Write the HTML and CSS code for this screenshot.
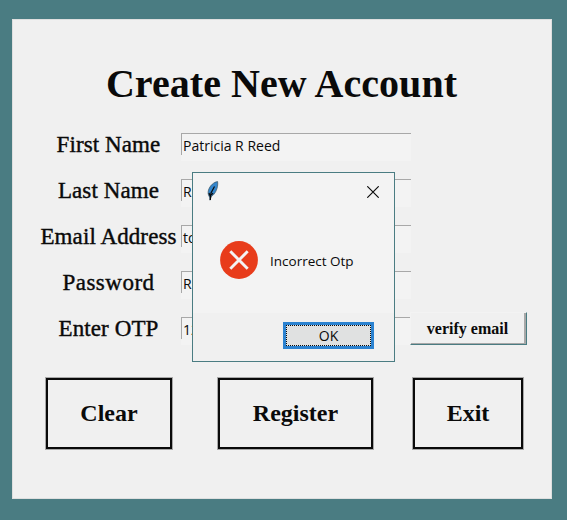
FILE: index.html
```html
<!DOCTYPE html>
<html lang="en">
<head>
<meta charset="utf-8">
<title>Create New Account</title>
<link rel="stylesheet" href="styles.css">
</head>
<body>
<main class="panel">
  <h1 class="title">Create New Account</h1>
  <form class="fields">
    <div class="row"><label class="label">First Name</label><div class="entry">Patricia R Reed</div></div>
    <div class="row"><label class="label">Last Name</label><div class="entry">R</div></div>
    <div class="row"><label class="label">Email Address</label><div class="entry">to</div></div>
    <div class="row"><label class="label spaced">Password</label><div class="entry">R</div></div>
    <div class="row"><label class="label">Enter OTP</label><div class="entry">12</div><button type="button" class="verify">verify email</button></div>
  </form>
  <div class="actions">
    <button type="button" class="action clear">Clear</button>
    <button type="button" class="action register">Register</button>
    <button type="button" class="action exit">Exit</button>
  </div>
</main>
<section class="dialog" role="alertdialog">
  <header class="dialog-bar">
    <svg class="feather" width="12" height="20" viewBox="0 0 12 20">
      <path d="M10.600.6C7 1 3 4.500 1.500 9C.8 11.500 1 14 2.500 16L3 19.200L4.200 15.500C8 13.500 11.500 7 10.600.6Z" fill="#3486cc" stroke="#3c5560" stroke-width=".7"/>
      <path d="M7.500 5.500L4 12L3.300 19M2 12L3.500 16M4.500 14L6 12" fill="none" stroke="#0a0a0a" stroke-width="1.200"/>
    </svg>
    <svg class="close" width="12" height="12" viewBox="0 0 12 12"><path d="M.3.3L11.700 11.700M11.700.3L.3 11.700" stroke="#0a0a0a" stroke-width="1.150"/></svg>
  </header>
  <div class="message">
    <svg width="38" height="38" viewBox="0 0 38 38"><circle cx="19" cy="19" r="18.900" fill="#e83c1b"/><path d="M10.300 10.300L27.700 27.700M27.700 10.300L10.300 27.700" stroke="#f3f3f3" stroke-width="2.900"/></svg>
    <span class="message-text">Incorrect Otp</span>
  </div>
  <footer class="dialog-foot"><button type="button" class="ok"><span>OK</span></button></footer>
</section>
</body>
</html>
```
FILE: styles.css
```css
* { box-sizing: border-box; }
body {
  margin: 0;
  height: 520px;
  overflow: hidden;
  padding: 19px 15px 0 12px;
  background: #4a7c82;
  color: #0a0a0a;
}
button { color: inherit; padding: 0; border-radius: 0; }
.panel {
  width: 540px;
  height: 480px;
  background: #f0f0f0;
  border: 1px solid #dedfdf;
  font-family: "Liberation Serif", serif;
}
.title {
  margin: 41px 0 0;
  padding-right: 1px;
  font-size: 40px;
  letter-spacing: .05px;
  line-height: 46px;
  font-weight: bold;
  text-align: center;
}
.fields { margin-top: 24.500px; padding-left: 23px; }
.row { display: flex; align-items: flex-start; height: 46.200px; }
.label {
  width: 145px;
  text-align: center;
  font-size: 23px;
  line-height: 25px;
  letter-spacing: .1px;
  -webkit-text-stroke: .4px #0a0a0a;
}
.spaced { letter-spacing: .5px; }
.entry {
  width: 230px;
  height: 28px;
  margin-top: 1px;
  border-top: 1px solid #a8a8a8;
  background: linear-gradient(#a8a8a8, #a8a8a8) left top / 1px 21px no-repeat #f3f3f3;
  padding-left: 2px;
  font: 14px/23px "Open Sans", sans-serif;
}
.verify {
  width: 117px;
  height: 33px;
  margin: -4px 0 0 -1px;
  background: #f0f0f0;
  border: 1px solid #f3f3f3;
  border-right-color: #4a7c82;
  border-bottom-color: #4a7c82;
  box-shadow: inset -2px -1px #a8a8a8;
  font: bold 16px/30px "Liberation Serif", serif;
  padding-right: 2px;
}
.actions { display: flex; padding-left: 33px; margin-top: 15.500px; }
.action {
  height: 71px;
  background: transparent;
  border: 2.500px solid #0a0a0a;
  outline: .5px solid #a8a8a8;
  font: bold 24px/60px "Liberation Serif", serif;
}
.clear { width: 126px; }
.register { width: 155px; margin-left: 46px; }
.exit { width: 110px; margin-left: 40px; }
.dialog {
  position: absolute;
  left: 192px;
  top: 172px;
  width: 203px;
  height: 190px;
  background: #f3f3f3;
  border: 1px solid #4a7c82;
  font: 14px/20px "Open Sans", sans-serif;
}
.dialog-bar {
  display: flex;
  justify-content: space-between;
  padding: 8px 15px 0 14px;
  height: 68px;
}
.close { margin-top: 5px; }
.message { display: flex; gap: 12px; align-items: center; padding-left: 27px; }
.message-text { font-size: 13.500px; padding-top: 2px; }
.dialog-foot {
  display: flex;
  justify-content: flex-end;
  margin-top: 34px;
  height: 48px;
  padding: 9px 20px 0 0;
  background: #f0f0f0;
}
.ok {
  width: 91px;
  height: 27px;
  border: 3px solid #2b82d0;
  background: #e0e1e1;
  font: 14px/18px "Open Sans", sans-serif;
}
.ok span { display: block; height: 21px; border: 1px dotted #0a0a0a; line-height: 20px; }
```
